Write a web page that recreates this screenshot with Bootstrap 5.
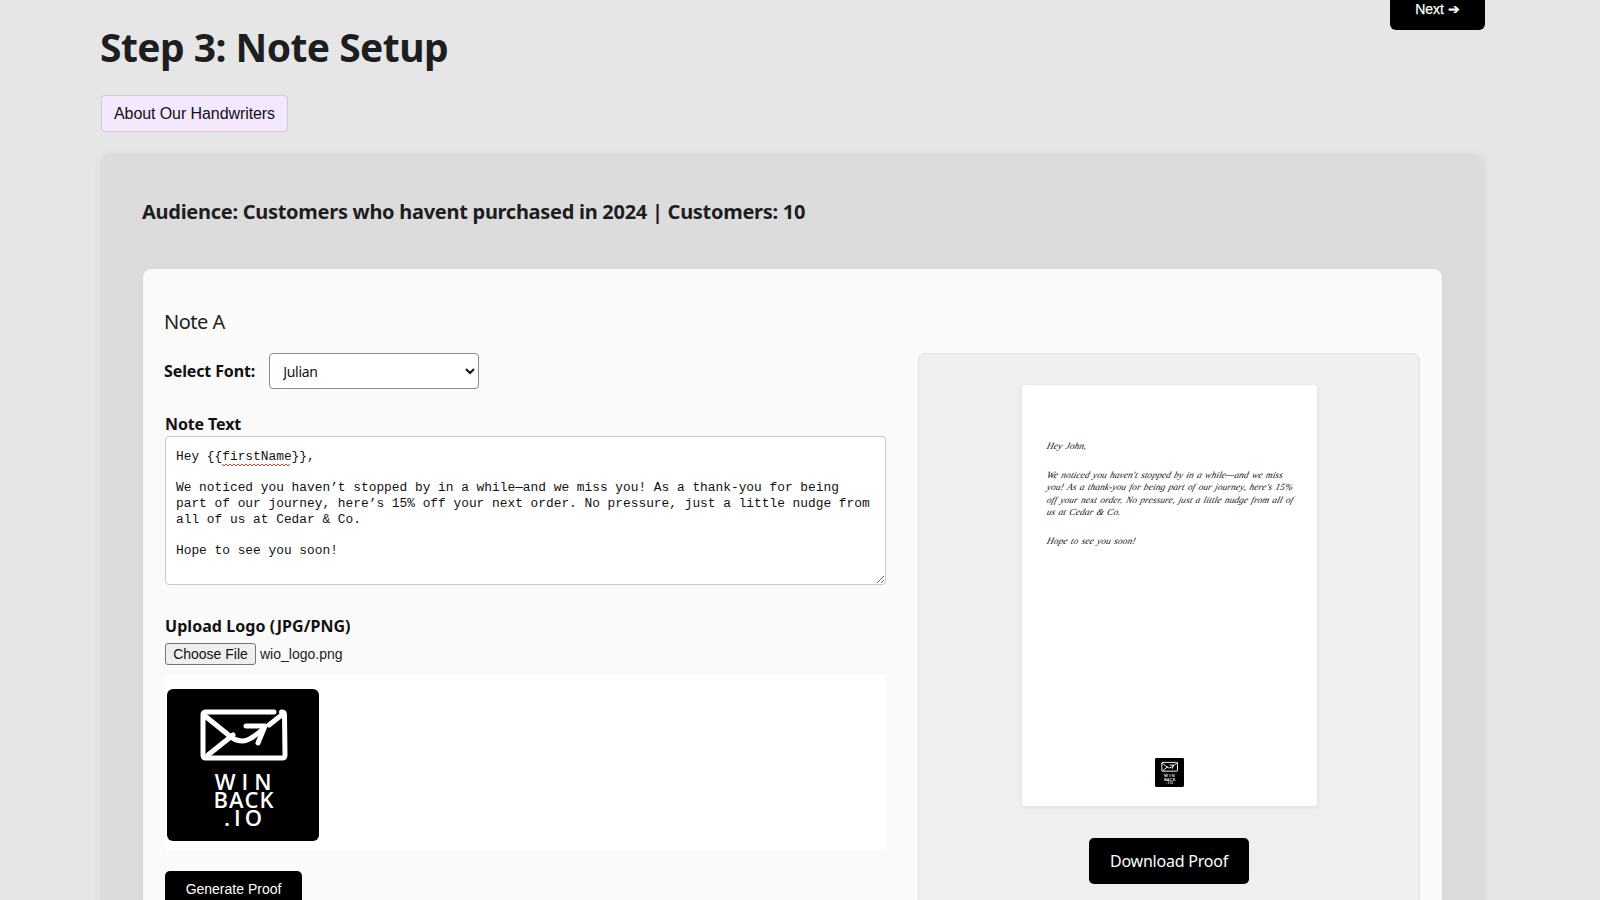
<!doctype html>
<html lang="en">
<head>
<meta charset="utf-8">
<title>Step 3: Note Setup</title>
<link href="https://cdn.jsdelivr.net/npm/bootstrap@5.3.0/dist/css/bootstrap.min.css" rel="stylesheet">
<style>
html,body{height:900px;overflow:hidden}
body{background:#e6e6e6;font-family:"Noto Sans",sans-serif;color:#1c1e21}
.page-wrap{padding:0 115px 0 100px}
.next-row{height:30px;margin-bottom:-30px}
.next-btn{width:95px;height:46px;margin-top:-16px;background:#000;color:#fff;border:0;border-radius:6px;font:400 14px/1 "Liberation Sans",sans-serif;padding:4px 0 0;-webkit-text-stroke:.25px #fff}
.next-btn:hover{background:#000;color:#fff}
.page-title{font-size:39px;font-weight:700;line-height:48px;padding-top:23px;margin:0 0 24px;letter-spacing:-.55px}
.about-btn{display:block;width:187px;height:37px;padding:0;margin-left:1px;background:#f4e8ff;border:1px solid #cfc9d6;border-radius:4px;font:16px "Liberation Sans",sans-serif;letter-spacing:-.08px;color:#111}
.outer-panel{margin-top:22px;background:#dcdcdc;border-radius:10px;padding:44px 43px 0;box-shadow:0 0 10px rgba(0,0,0,.05);height:800px;border:0}
.aud-title{font-size:20px;font-weight:700;line-height:28px;margin:0 0 43px -1px;letter-spacing:-.28px}
.inner-panel{background:#fafafa;border-radius:8px;padding:38px 21px 0 22px;height:700px;box-shadow:0 0 4px rgba(0,0,0,.05)}
.note-title{font-size:20px;font-weight:400;line-height:30px;margin:0 0 16px -1px;letter-spacing:-.5px;color:#222}
.split{display:grid;grid-template-columns:721px 502px;gap:32px}
.lbl{font-size:16px;font-weight:700;letter-spacing:-.12px;color:#111;margin:0}
.font-pick{height:36px;margin-bottom:24px;gap:14px}
.font-pick .lbl{margin-left:-1px}
.font-select{width:210px;height:36px;border:1px solid #8c8c8c;border-radius:4px;background:#fff;padding:0 9px;font:14px "Noto Sans",sans-serif;letter-spacing:-.3px;color:#111}
.note-lbl{display:block;line-height:22px;margin-bottom:1px}
.note-box{position:relative;height:149px;margin-bottom:30px}
.note-area{display:block;width:100%;height:149px;border:1px solid #c8c8c8;border-radius:4px;background:#fff;padding:12px 10px 10px;font:12.85px/15.7px "Liberation Mono",monospace;color:#111;outline:0}
.squiggle{position:absolute;left:57px;top:27px}
.up-lbl{display:block;line-height:22px;margin-bottom:6px;letter-spacing:.06px}
.file-row{height:22px;margin-bottom:10px;gap:4px;font:14px "Liberation Sans",sans-serif;color:#222}
.file-btn{width:91px;height:22px;padding:0;background:#efefef;border:1px solid #767676;border-radius:3px;font:14px "Liberation Sans",sans-serif;color:#111}
.logo-box{height:176px;background:#fff;padding:14px 2px;margin-bottom:20px}
.logo-box svg{display:block}
.gen-btn{width:137px;height:36px;background:#000;color:#fff;border:0;border-radius:5px;font:14px "Liberation Sans",sans-serif;padding:0}
.gen-btn:hover,.dl-btn:hover{background:#000;color:#fff}
.proof-panel{background:#efefef;border:1px solid #e0e0e0;border-radius:8px;height:640px;padding:31px 0 0}
.paper{width:295px;height:421px;margin:0 auto 32px;background:#fff;border-radius:3px;box-shadow:0 1px 5px rgba(0,0,0,.08);padding:55px 20px 0;display:flex;flex-direction:column}
.hand{font:italic 9.4px/12.2px "Liberation Serif",serif;color:#111;margin:0 0 17px 5px;letter-spacing:.1px;word-spacing:.8px;white-space:nowrap}
.hand-line{display:block;transform:skewX(-14deg);transform-origin:left center}
.paper svg{display:block;margin:auto auto 19px}
.dl-btn{display:block;width:160px;height:46px;margin:0 auto;padding:0;background:#000;color:#fff;border:0;border-radius:5px;font-size:16px;letter-spacing:-.22px}
</style>
</head>
<body>
<div class="page-wrap">
  <div class="next-row d-flex justify-content-end"><button class="btn next-btn" type="button">Next ➔</button></div>
  <h1 class="page-title">Step 3: Note Setup</h1>
  <button class="btn about-btn" type="button">About Our Handwriters</button>
  <div class="outer-panel">
    <h2 class="aud-title">Audience: Customers who havent purchased in 2024 | Customers: 10</h2>
    <div class="inner-panel">
      <h3 class="note-title">Note A</h3>
      <div class="split">
        <div>
          <div class="font-pick d-flex align-items-center">
            <label class="lbl" for="fontSel">Select Font:</label>
            <select class="font-select" id="fontSel"><option>Julian</option></select>
          </div>
          <label class="lbl note-lbl" for="noteTxt">Note Text</label>
          <div class="note-box">
            <textarea class="note-area" id="noteTxt" spellcheck="false">Hey {{firstName}},

We noticed you haven’t stopped by in a while—and we miss you! As a thank-you for being part of our journey, here’s 15% off your next order. No pressure, just a little nudge from all of us at Cedar &amp; Co.

Hope to see you soon!</textarea>
            <svg class="squiggle" width="70" height="4" viewBox="0 0 70 4" aria-hidden="true"><path d="M0 1 2 3 4 1 6 3 8 1 10 3 12 1 14 3 16 1 18 3 20 1 22 3 24 1 26 3 28 1 30 3 32 1 34 3 36 1 38 3 40 1 42 3 44 1 46 3 48 1 50 3 52 1 54 3 56 1 58 3 60 1 62 3 64 1 66 3 68 1" fill="none" stroke="#e0403a" stroke-width="1"/></svg>
          </div>
          <label class="lbl up-lbl">Upload Logo (JPG/PNG)</label>
          <div class="file-row d-flex align-items-center">
            <button class="file-btn" type="button">Choose File</button><span>wio_logo.png</span>
          </div>
          <div class="logo-box">
            <svg width="152" height="152" viewBox="0 0 152 152" role="img" aria-label="Winback.io logo">
              <rect width="152" height="152" rx="6" fill="#000"/>
              <g fill="none" stroke="#fff" stroke-linecap="round" stroke-linejoin="round">
                <path stroke-width="5" d="M107 23H39q-3 0-3 3V66q0 3 3 3h76q3 0 3-3l-.5-40q0-3-3-3"/>
                <path stroke-width="5" d="M38 27 64 48q5 4 12 4 8-1 20-12"/>
                <path stroke-width="5" d="M79 37 98 37 91 54"/>
                <path stroke-width="5" d="M41 66 66 46M102 36 116 25"/>
              </g>
              <text x="79" y="101" text-anchor="middle" fill="#fff" font-family="Open Sans,sans-serif" font-weight="600" font-size="22" letter-spacing="6">WIN</text>
              <text x="77" y="119" text-anchor="middle" fill="#fff" font-family="Open Sans,sans-serif" font-weight="600" font-size="22" letter-spacing="1">BACK</text>
              <text x="78" y="137" text-anchor="middle" fill="#fff" font-family="Open Sans,sans-serif" font-weight="600" font-size="22" letter-spacing="4">.IO</text>
            </svg>
          </div>
          <button class="btn gen-btn" type="button">Generate Proof</button>
        </div>
        <div class="proof-panel">
          <div class="paper">
            <p class="hand"><span class="hand-line">Hey John,</span></p>
            <p class="hand"><span class="hand-line">We noticed you haven't stopped by in a while—and we miss</span><span class="hand-line">you! As a thank-you for being part of our journey, here's 15%</span><span class="hand-line">off your next order. No pressure, just a little nudge from all of</span><span class="hand-line">us at Cedar &amp; Co.</span></p>
            <p class="hand"><span class="hand-line">Hope to see you soon!</span></p>
            <svg width="29" height="29" viewBox="0 0 152 152" role="img" aria-label="Logo">
              <rect width="152" height="152" rx="6" fill="#000"/>
              <g fill="none" stroke="#fff" stroke-linecap="round" stroke-linejoin="round">
                <path stroke-width="5" d="M107 23H39q-3 0-3 3V66q0 3 3 3h76q3 0 3-3l-.5-40q0-3-3-3"/>
                <path stroke-width="5" d="M38 27 64 48q5 4 12 4 8-1 20-12"/>
                <path stroke-width="5" d="M79 37 98 37 91 54"/>
                <path stroke-width="5" d="M41 66 66 46M102 36 116 25"/>
              </g>
              <text x="79" y="101" text-anchor="middle" fill="#fff" font-family="Open Sans,sans-serif" font-weight="600" font-size="22" letter-spacing="6">WIN</text>
              <text x="77" y="119" text-anchor="middle" fill="#fff" font-family="Open Sans,sans-serif" font-weight="600" font-size="22" letter-spacing="1">BACK</text>
              <text x="78" y="137" text-anchor="middle" fill="#fff" font-family="Open Sans,sans-serif" font-weight="600" font-size="22" letter-spacing="4">.IO</text>
            </svg>
          </div>
          <button class="btn dl-btn" type="button">Download Proof</button>
        </div>
      </div>
    </div>
  </div>
</div>
<script src="https://cdn.jsdelivr.net/npm/bootstrap@5.3.0/dist/js/bootstrap.bundle.min.js"></script>
</body>
</html>
